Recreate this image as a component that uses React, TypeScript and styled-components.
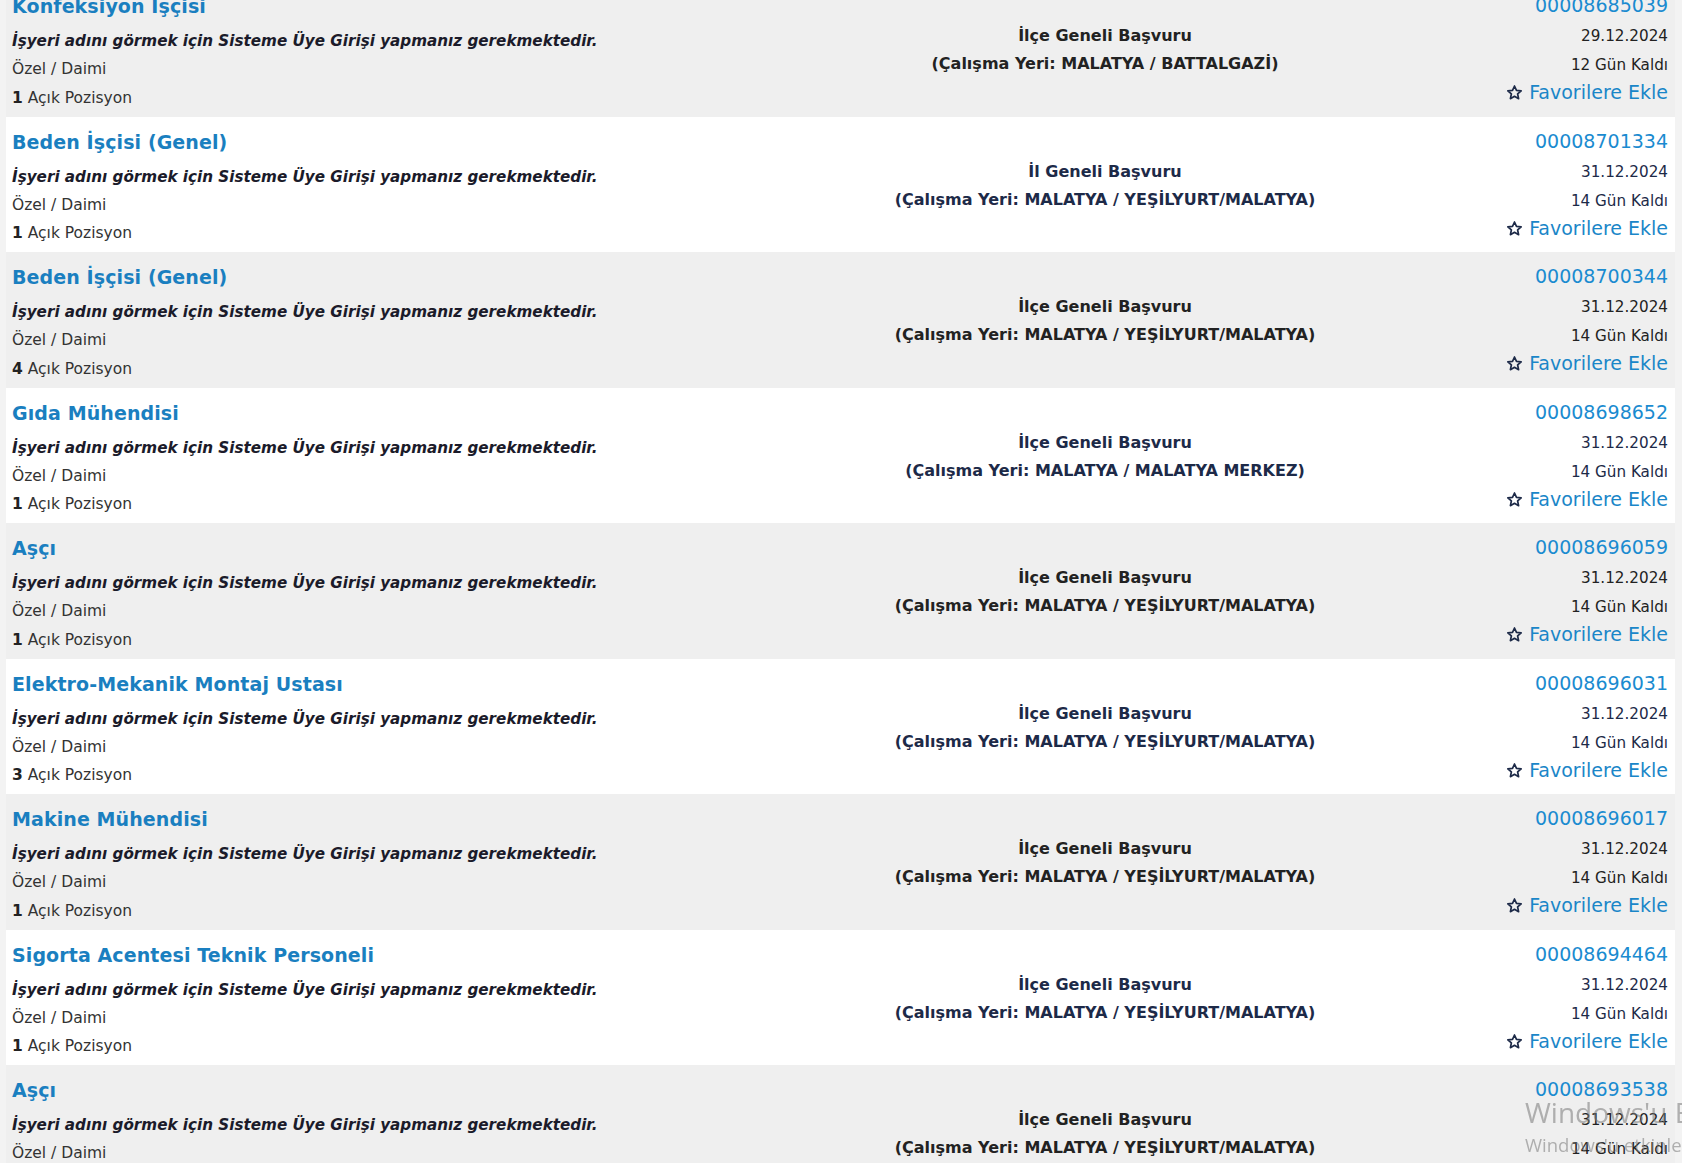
import React from "react";
import styled, { createGlobalStyle } from "styled-components";

const GlobalStyle = createGlobalStyle`
  html, body {
    margin: 0;
    padding: 0;
    background: #f3f3f3;
    overflow: hidden;
  }
  body {
    font-family: "DejaVu Sans", Verdana, sans-serif;
  }
`;

type Job = {
  title: string;
  scope: string;
  place: string;
  id: string;
  date: string;
  left: string;
  count: number;
};

const jobs: Job[] = [
  { title: "Konfeksiyon İşçisi", scope: "İlçe Geneli Başvuru", place: "MALATYA / BATTALGAZİ", id: "00008685039", date: "29.12.2024", left: "12 Gün Kaldı", count: 1 },
  { title: "Beden İşçisi (Genel)", scope: "İl Geneli Başvuru", place: "MALATYA / YEŞİLYURT/MALATYA", id: "00008701334", date: "31.12.2024", left: "14 Gün Kaldı", count: 1 },
  { title: "Beden İşçisi (Genel)", scope: "İlçe Geneli Başvuru", place: "MALATYA / YEŞİLYURT/MALATYA", id: "00008700344", date: "31.12.2024", left: "14 Gün Kaldı", count: 4 },
  { title: "Gıda Mühendisi", scope: "İlçe Geneli Başvuru", place: "MALATYA / MALATYA MERKEZ", id: "00008698652", date: "31.12.2024", left: "14 Gün Kaldı", count: 1 },
  { title: "Aşçı", scope: "İlçe Geneli Başvuru", place: "MALATYA / YEŞİLYURT/MALATYA", id: "00008696059", date: "31.12.2024", left: "14 Gün Kaldı", count: 1 },
  { title: "Elektro-Mekanik Montaj Ustası", scope: "İlçe Geneli Başvuru", place: "MALATYA / YEŞİLYURT/MALATYA", id: "00008696031", date: "31.12.2024", left: "14 Gün Kaldı", count: 3 },
  { title: "Makine Mühendisi", scope: "İlçe Geneli Başvuru", place: "MALATYA / YEŞİLYURT/MALATYA", id: "00008696017", date: "31.12.2024", left: "14 Gün Kaldı", count: 1 },
  { title: "Sigorta Acentesi Teknik Personeli", scope: "İlçe Geneli Başvuru", place: "MALATYA / YEŞİLYURT/MALATYA", id: "00008694464", date: "31.12.2024", left: "14 Gün Kaldı", count: 1 },
  { title: "Aşçı", scope: "İlçe Geneli Başvuru", place: "MALATYA / YEŞİLYURT/MALATYA", id: "00008693538", date: "31.12.2024", left: "14 Gün Kaldı", count: 1 },
];

const Page = styled.div`
  padding: 0 7px 0 6px;
  margin-top: -19px;
`;

const List = styled.div`
  display: flex;
  flex-direction: column;
`;

const Row = styled.div<{ $shade: boolean }>`
  display: grid;
  grid-template-columns: 864px 470px 1fr;
  height: 135.5px;
  background: ${(p) => (p.$shade ? "#efefef" : "#ffffff")};
  color: ${(p) => (p.$shade ? "#222222" : "#1d2a48")};
`;

const LeftCol = styled.div`
  display: flex;
  flex-direction: column;
  padding: 8px 0 0 6px;
`;

const Title = styled.a`
  font-size: 19px;
  font-weight: bold;
  line-height: 34px;
  color: #1a7fc0;
  text-decoration: none;
  letter-spacing: 0.1px;
`;

const Employer = styled.div`
  margin-top: 4px;
  font-size: 15.2px;
  font-weight: bold;
  font-style: italic;
  line-height: 28px;
  color: #1b1b2a;
`;

const Meta = styled.div`
  font-size: 15.5px;
  line-height: 28.5px;
  color: #333;
`;

const Count = styled.b`
  color: #222;
`;

const MiddleCol = styled.div`
  display: flex;
  flex-direction: column;
  justify-content: center;
  align-items: center;
  padding-top: 3px;
`;

const Scope = styled.div`
  font-size: 16px;
  font-weight: bold;
  line-height: 28px;
`;

const RightCol = styled.div`
  display: flex;
  flex-direction: column;
  align-items: flex-end;
  padding: 8px 7px 0 0;
`;

const JobId = styled.a`
  font-size: 19px;
  line-height: 32px;
  color: #1a8bd0;
  text-decoration: none;
`;

const DateText = styled.div`
  font-size: 15.2px;
  line-height: 30px;
`;

const Remaining = styled.div`
  font-size: 15.2px;
  line-height: 28px;
`;

const Favorite = styled.a`
  display: flex;
  align-items: center;
  gap: 6px;
  font-size: 19px;
  line-height: 27px;
  color: #1a86c8;
  text-decoration: none;
`;

const Watermark = styled.div`
  position: fixed;
  left: 1525px;
  top: 1094px;
  color: rgba(120, 120, 120, 0.55);
  font-family: "Open Sans", "DejaVu Sans", sans-serif;
  white-space: nowrap;
  pointer-events: none;
`;

const WatermarkTitle = styled.div`
  font-size: 28px;
  line-height: 36px;
`;

const WatermarkSub = styled.div`
  font-size: 18.5px;
  line-height: 30px;
`;

const StarIcon = () => (
  <svg width="17" height="17" viewBox="0 0 24 24" fill="none" stroke="#1d2a48" strokeWidth="2.4" strokeLinejoin="round">
    <path d="M12 2.8l2.8 6.1 6.6.7-5 4.5 1.4 6.6L12 17.3l-5.8 3.4 1.4-6.6-5-4.5 6.6-.7z" />
  </svg>
);

export default function App() {
  return (
    <>
      <GlobalStyle />
      <Page>
        <List>
          {jobs.map((j, i) => (
            <Row key={j.id} $shade={i % 2 === 0}>
              <LeftCol>
                <Title href="#">{j.title}</Title>
                <Employer>İşyeri adını görmek için Sisteme Üye Girişi yapmanız gerekmektedir.</Employer>
                <Meta>Özel / Daimi</Meta>
                <Meta>
                  <Count>{j.count}</Count> Açık Pozisyon
                </Meta>
              </LeftCol>
              <MiddleCol>
                <Scope>{j.scope}</Scope>
                <Scope>(Çalışma Yeri: {j.place})</Scope>
              </MiddleCol>
              <RightCol>
                <JobId href="#">{j.id}</JobId>
                <DateText>{j.date}</DateText>
                <Remaining>{j.left}</Remaining>
                <Favorite href="#">
                  <StarIcon />
                  Favorilere Ekle
                </Favorite>
              </RightCol>
            </Row>
          ))}
        </List>
      </Page>
      <Watermark>
        <WatermarkTitle>Windows'u Etkinleştir</WatermarkTitle>
        <WatermarkSub>Windows'u etkinleştirmek için Ayarlar'a gidin.</WatermarkSub>
      </Watermark>
    </>
  );
}
